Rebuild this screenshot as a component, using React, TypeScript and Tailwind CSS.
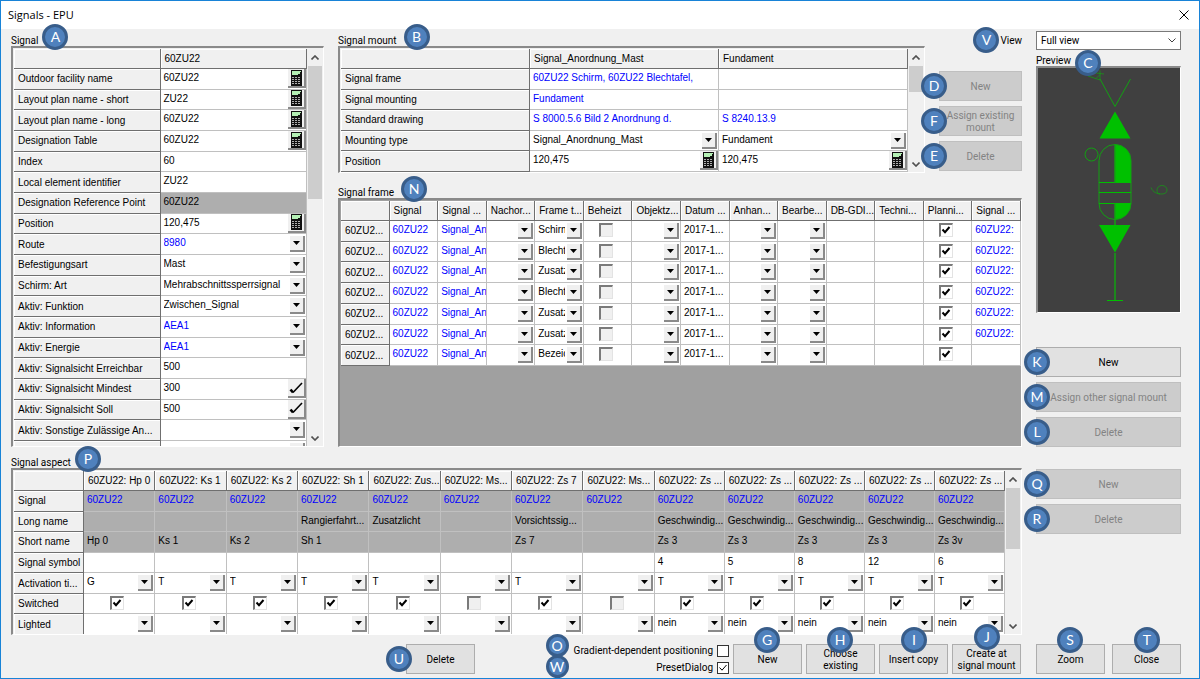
import type { ReactNode } from "react";
import clsx from "clsx";

type Cell = {
  text?: string;
  kind?: "text" | "link" | "select" | "linkSelect" | "calc" | "edit" | "check";
  checked?: boolean;
  gray?: boolean;
};

type Row = { label: string; cells: Cell[] };

const t = (text = ""): Cell => ({ text });
const link = (text: string): Cell => ({ text, kind: "link" });
const sel = (text = ""): Cell => ({ text, kind: "select" });
const calc = (text: string): Cell => ({ text, kind: "calc" });
const check = (checked: boolean): Cell => ({ kind: "check", checked });
const gray = (cell: Cell): Cell => ({ ...cell, gray: true });

const SIGNAL_ROWS: Row[] = [
  { label: "Outdoor facility name", cells: [calc("60ZU22")] },
  { label: "Layout plan name - short", cells: [calc("ZU22")] },
  { label: "Layout plan name - long", cells: [calc("60ZU22")] },
  { label: "Designation Table", cells: [calc("60ZU22")] },
  { label: "Index", cells: [t("60")] },
  { label: "Local element identifier", cells: [t("ZU22")] },
  { label: "Designation Reference Point", cells: [gray(t("60ZU22"))] },
  { label: "Position", cells: [calc("120,475")] },
  { label: "Route", cells: [{ text: "8980", kind: "linkSelect" }] },
  { label: "Befestigungsart", cells: [sel("Mast")] },
  { label: "Schirm: Art", cells: [sel("Mehrabschnittssperrsignal")] },
  { label: "Aktiv: Funktion", cells: [sel("Zwischen_Signal")] },
  { label: "Aktiv: Information", cells: [{ text: "AEA1", kind: "linkSelect" }] },
  { label: "Aktiv: Energie", cells: [{ text: "AEA1", kind: "linkSelect" }] },
  { label: "Aktiv: Signalsicht Erreichbar", cells: [t("500")] },
  { label: "Aktiv: Signalsicht Mindest", cells: [{ text: "300", kind: "edit" }] },
  { label: "Aktiv: Signalsicht Soll", cells: [{ text: "500", kind: "edit" }] },
  { label: "Aktiv: Sonstige Zulässige An...", cells: [sel()] },
  { label: "", cells: [sel()] },
];

const MOUNT_ROWS: Row[] = [
  { label: "Signal frame", cells: [link("60ZU22 Schirm, 60ZU22 Blechtafel,"), t()] },
  { label: "Signal mounting", cells: [link("Fundament"), t()] },
  { label: "Standard drawing", cells: [link("S 8000.5.6 Bild 2 Anordnung d."), link("S 8240.13.9")] },
  { label: "Mounting type", cells: [sel("Signal_Anordnung_Mast"), sel("Fundament")] },
  { label: "Position", cells: [calc("120,475"), calc("120,475")] },
];

const FRAME_HEAD = [
  "Signal", "Signal ...", "Nachor...", "Frame t...", "Beheizt", "Objektz...", "Datum ...",
  "Anhan...", "Bearbe...", "DB-GDI...", "Techni...", "Planni...", "Signal ...",
];

const FRAME_TYPES = ["Schirm", "Blecht", "Zusatz", "Blecht", "Zusatz", "Zusatz", "Bezeic"];

const FRAME_ROWS: Row[] = FRAME_TYPES.map((type, i) => ({
  label: "60ZU2...",
  cells: [
    link("60ZU22"), link("Signal_An"), sel(), sel(type), check(false), sel(), t("2017-1..."),
    sel(), sel(), t(), t(), check(true), i < 6 ? link("60ZU22:") : t(),
  ],
}));

const ASPECTS = [
  { head: "Hp 0", long: "", short: "Hp 0", symbol: "", time: "G", on: true, lit: "" },
  { head: "Ks 1", long: "", short: "Ks 1", symbol: "", time: "T", on: true, lit: "" },
  { head: "Ks 2", long: "", short: "Ks 2", symbol: "", time: "T", on: true, lit: "" },
  { head: "Sh 1", long: "Rangierfahrt...", short: "Sh 1", symbol: "", time: "T", on: true, lit: "" },
  { head: "Zus...", long: "Zusatzlicht", short: "", symbol: "", time: "T", on: true, lit: "" },
  { head: "Ms...", long: "", short: "", symbol: "", time: "", on: false, lit: "" },
  { head: "Zs 7", long: "Vorsichtssig...", short: "Zs 7", symbol: "", time: "T", on: true, lit: "" },
  { head: "Ms...", long: "", short: "", symbol: "", time: "", on: false, lit: "" },
  { head: "Zs ...", long: "Geschwindig...", short: "Zs 3", symbol: "4", time: "T", on: true, lit: "nein" },
  { head: "Zs ...", long: "Geschwindig...", short: "Zs 3", symbol: "5", time: "T", on: true, lit: "nein" },
  { head: "Zs ...", long: "Geschwindig...", short: "Zs 3", symbol: "8", time: "T", on: true, lit: "nein" },
  { head: "Zs ...", long: "Geschwindig...", short: "Zs 3", symbol: "12", time: "T", on: true, lit: "nein" },
  { head: "Zs ...", long: "Geschwindig...", short: "Zs 3v", symbol: "6", time: "T", on: true, lit: "nein" },
];

const ASPECT_ROWS: Row[] = [
  { label: "Signal", cells: ASPECTS.map(() => gray(link("60ZU22"))) },
  { label: "Long name", cells: ASPECTS.map((a) => gray(t(a.long))) },
  { label: "Short name", cells: ASPECTS.map((a) => gray(t(a.short))) },
  { label: "Signal symbol", cells: ASPECTS.map((a) => t(a.symbol)) },
  { label: "Activation ti...", cells: ASPECTS.map((a) => sel(a.time)) },
  { label: "Switched", cells: ASPECTS.map((a) => check(a.on)) },
  { label: "Lighted", cells: ASPECTS.map((a) => sel(a.lit)) },
];

const ASPECT_COLS = [
  "w-[70px]",
  ...ASPECTS.map((_, i) => (i < 8 ? "w-[7.2%]" : "w-auto")),
];

function Badge({ children, className }: { children: string; className: string }) {
  return (
    <span
      className={clsx(
        "absolute z-10 flex items-center justify-center rounded-full border-3 border-[#385d8a] bg-[#4f81bd] font-[Lato,sans-serif] text-sm leading-none text-white",
        className
      )}
    >
      {children}
    </span>
  );
}

function CalcIcon() {
  return (
    <svg viewBox="0 0 11 16" className="h-4 w-[11px]" shapeRendering="crispEdges">
      <rect width="11" height="16" fill="#111" />
      <rect x="1" y="1" width="9" height="4" fill="#b4f0b4" />
      <path d="M7 4h2V2" stroke="#111" fill="none" />
      {[7, 9, 11, 13].map((y) => (
        <path key={y} d={`M1 ${y + 0.5}h2M4 ${y + 0.5}h2M7 ${y + 0.5}h2`} stroke="#b0b0b0" />
      ))}
    </svg>
  );
}

function ToolButton({ label, children }: { label: string; children: ReactNode }) {
  return (
    <button
      type="button"
      aria-label={label}
      className="absolute top-0 right-0 flex h-[19px] w-[18px] items-center justify-center border-r-2 border-b-2 border-[#8a8a8a] bg-[#f0f0f0]"
    >
      {children}
    </button>
  );
}

function CheckMark({ className }: { className?: string }) {
  return (
    <svg viewBox="0 0 10 10" className={className} fill="none" stroke="currentColor">
      <path d="M1.5 4.5 4 7.2 8.5 2" />
    </svg>
  );
}

function CellContent({ cell, name }: { cell: Cell; name: string }) {
  const { kind = "text", text = "" } = cell;

  if (kind === "check") {
    return (
      <div className="flex h-[18px] items-center justify-center pr-1">
        <span className="relative flex">
          <input
            type="checkbox"
            aria-label={name}
            defaultChecked={cell.checked}
            className="peer size-3.5 appearance-none border-t-2 border-r border-b border-l-2 border-[#e3e3e3] border-t-[#7a7a7a] border-l-[#7a7a7a] bg-[#f0f0f0] checked:bg-white"
          />
          <CheckMark className="pointer-events-none absolute top-[2px] left-[2px] hidden size-2.5 stroke-2 peer-checked:block" />
        </span>
      </div>
    );
  }

  if (kind === "select" || kind === "linkSelect") {
    return (
      <div className="relative h-[19px]">
        <select
          aria-label={name}
          className={clsx(
            "block h-[18px] w-full appearance-none overflow-hidden pr-[18px] pl-[3px] leading-[18px] text-clip outline-none",
            kind === "linkSelect" && "text-[#0000ff]"
          )}
        >
          <option>{text}</option>
        </select>
        <span className="pointer-events-none absolute top-[2px] right-px flex h-4 w-[15px] items-center justify-center border-r-2 border-b-2 border-[#8a8a8a] bg-[#f0f0f0]">
          <svg viewBox="0 0 7 4" className="h-1 w-[7px]">
            <path d="M0 0h7L3.5 4z" />
          </svg>
        </span>
      </div>
    );
  }

  return (
    <div className="relative h-[19px] overflow-hidden pl-[3px] leading-[18px] whitespace-nowrap">
      {kind === "link" ? <a href="#" className="text-[#0000ff]">{text}</a> : text}
      {kind === "calc" && (
        <ToolButton label={`Calculate ${name}`}>
          <CalcIcon />
        </ToolButton>
      )}
      {kind === "edit" && (
        <ToolButton label={`Edit ${name}`}>
          <svg viewBox="0 0 14 14" className="size-3.5" fill="none" stroke="#000">
            <path d="M1.5 8.5 4 11.5" strokeWidth="2.6" />
            <path d="M4 11.5 13 2" strokeWidth="1.6" />
          </svg>
        </ToolButton>
      )}
    </div>
  );
}

function DataGrid({ head, rows, className, cols }: { head: string[]; rows: Row[]; className: string; cols?: string[] }) {
  const headCell =
    "overflow-hidden border-r border-b border-[#6f6f6f] bg-[#f0f0f0] p-0 pt-px pl-1 text-left font-normal whitespace-nowrap shadow-[inset_1px_1px_0_#fff]";
  return (
    <table
      className={clsx(
        "w-full table-fixed border-separate border-spacing-0 font-['Liberation_Sans',sans-serif] text-[10px] leading-4",
        className
      )}
    >
      {cols && (
        <colgroup>
          {cols.map((c, i) => (
            <col key={i} className={c} />
          ))}
        </colgroup>
      )}
      <thead>
        <tr className="h-5">
          <th className={headCell} />
          {head.map((h, i) => (
            <th key={i} scope="col" className={headCell}>{h}</th>
          ))}
        </tr>
      </thead>
      <tbody>
        {rows.map((row, r) => (
          <tr key={r} className="h-5">
            <th scope="row" className={headCell}>{row.label}</th>
            {row.cells.map((cell, c) => (
              <td
                key={c}
                className={clsx(
                  "overflow-hidden border-r border-b border-[#c0c0c0] p-0 align-top",
                  cell.gray ? "bg-[#aeaeae]" : "bg-white"
                )}
              >
                <CellContent cell={cell} name={row.label} />
              </td>
            ))}
          </tr>
        ))}
      </tbody>
    </table>
  );
}

function ScrollBar({ thumb }: { thumb: string }) {
  return (
    <div className="flex w-4 shrink-0 flex-col items-center bg-[#f0f0f0]" aria-hidden="true">
      <svg viewBox="0 0 8 5" className="my-[6px] h-[5px] w-2 shrink-0" fill="none" stroke="#505050" strokeWidth="1.6">
        <path d="M.5 4.5 4 1l3.5 3.5" />
      </svg>
      <div className={clsx("w-3.5 shrink-0 bg-[#cdcdcd]", thumb)} />
      <svg viewBox="0 0 8 5" className="mt-auto mb-[5px] h-[5px] w-2 shrink-0" fill="none" stroke="#505050" strokeWidth="1.6">
        <path d="M.5.5 4 4 7.5.5" />
      </svg>
    </div>
  );
}

function Panel({ className, children }: { className: string; children: ReactNode }) {
  return (
    <div
      className={clsx(
        "flex overflow-hidden border-t-2 border-r border-b border-l-2 border-white border-t-[#8a8a8a] border-l-[#8a8a8a] pt-px pl-px",
        className
      )}
    >
      {children}
    </div>
  );
}

function PanelTitle({ badge, badgeClass, children }: { badge: string; badgeClass: string; children: string }) {
  return (
    <h2 className="flex h-[17px] items-end leading-[10px]">
      <span className="relative">
        {children}
        <Badge className={clsx("-top-3 left-full size-[26px]", badgeClass)}>{badge}</Badge>
      </span>
    </h2>
  );
}

type PushButtonProps = {
  badge: string;
  badgeClass: string;
  className?: string;
  disabled?: boolean;
  children: string;
};

function PushButton({ badge, badgeClass, className, disabled, children }: PushButtonProps) {
  return (
    <div className={clsx("relative", className)}>
      <button
        type="button"
        disabled={disabled}
        className="flex h-[30px] w-full items-center justify-center border border-[#adadad] bg-[#e1e1e1] px-1 pt-px text-center leading-3 disabled:border-[#bfbfbf] disabled:bg-[#cccccc] disabled:text-[#838383]"
      >
        {children}
      </button>
      <Badge className={clsx("size-[26px]", badgeClass)}>{badge}</Badge>
    </div>
  );
}

function OptionCheck({ id, label, badge, checked }: { id: string; label: string; badge: string; checked?: boolean }) {
  return (
    <div className="flex h-[17px] items-center justify-end gap-1">
      <label htmlFor={id}>{label}</label>
      <span className="relative flex">
        <input
          id={id}
          type="checkbox"
          defaultChecked={checked}
          className="peer size-3 appearance-none border border-[#333] bg-white"
        />
        <CheckMark className="pointer-events-none absolute top-px left-px hidden size-2.5 peer-checked:block" />
      </span>
      <Badge className={clsx("left-0 size-[23px]", badge === "O" ? "-top-2" : "-bottom-0.5")}>{badge}</Badge>
    </div>
  );
}

function Preview() {
  return (
    <svg viewBox="0 0 142 244" className="block w-full" fill="none" stroke="#12a012">
      <path d="M62 11 77 38.5 92.5 11" />
      <path d="M62 2.5v9.5L50 8M58 5l8 1M58 10.5l4-4" strokeWidth=".7" />
      <path d="M77 43.5 92.5 70.5h-31zM61 157h31.5L77 184.5z" fill="#00c000" stroke="none" />
      <path d="M77 76.5a16 16 0 0 1 16 16v22H77zM77 135.5h16a16 16 0 0 1-16 16z" fill="#00c000" stroke="none" />
      <rect x="61" y="76.5" width="32" height="75" rx="16" />
      <path d="M61 114.5h32M61 124.5h32M61 135.5h32" stroke="#00c000" />
      <path d="M77 76.5v38M77 135.5V157M77 185v47" strokeWidth="1.5" />
      <path d="M69 232.5h16" stroke="#00c000" />
      <circle cx="53.5" cy="86.5" r="6.5" />
      <path d="M113 119.5c2 5 6 6.5 11 6.5 3 0 5-1.5 5-4s-2-4.5-5-4.5-5 2-5 4.5 1 4 3 4" strokeWidth=".7" />
    </svg>
  );
}

export default function App() {
  return (
    <div className="flex min-h-screen flex-col border border-[#1883d7] bg-[#f0f0f0] font-[Roboto,sans-serif] text-[10px] text-black">
      <header className="flex h-7 items-center justify-between bg-white pr-[10px] pl-[7px] font-['Open_Sans',sans-serif] text-[11px]">
        <h1>Signals - EPU</h1>
        <button type="button" aria-label="Close window">
          <svg viewBox="0 0 10 10" className="size-2.5" stroke="#000" fill="none">
            <path d="M.5.5l9 9M9.5.5l-9 9" />
          </svg>
        </button>
      </header>

      <main className="flex gap-3.5 pr-[18px] pl-[10px]">
        <div className="min-w-0 flex-1">
          <div className="flex gap-3.5">
            <section className="w-[313px] shrink-0">
              <PanelTitle badge="A" badgeClass="ml-1">Signal</PanelTitle>
              <Panel className="h-[401px]">
                <div className="min-w-0 flex-1">
                  <DataGrid head={["60ZU22"]} rows={SIGNAL_ROWS} className="h-[413px]" />
                </div>
                <ScrollBar thumb="h-[133px]" />
              </Panel>
            </section>

            <div className="min-w-0 flex-1">
              <div className="flex gap-3.5">
                <section className="min-w-0 flex-1">
                  <PanelTitle badge="B" badgeClass="ml-[7px]">Signal mount</PanelTitle>
                  <Panel className="h-[127px]">
                    <div className="min-w-0 flex-1">
                      <DataGrid head={["Signal_Anordnung_Mast", "Fundament"]} rows={MOUNT_ROWS} className="h-[123px]" />
                    </div>
                    <ScrollBar thumb="h-[26px]" />
                  </Panel>
                </section>
                <div className="w-[83px] shrink-0">
                  <div className="flex h-[17px] items-end justify-end leading-[10px]">
                    <span className="relative">
                      <label htmlFor="view">View</label>
                      <Badge className="-top-[9px] right-full mr-px size-[26px]">V</Badge>
                    </span>
                  </div>
                  <div className="mt-[25px] flex flex-col gap-[5px]">
                    <PushButton badge="D" badgeClass="top-[2px] -left-[18px]" disabled>New</PushButton>
                    <PushButton badge="F" badgeClass="top-[2px] -left-[18px]" disabled>Assign existing mount</PushButton>
                    <PushButton badge="E" badgeClass="top-[2px] -left-[18px]" disabled>Delete</PushButton>
                  </div>
                </div>
              </div>

              <section className="mt-2">
                <PanelTitle badge="N" badgeClass="ml-[7px]">Signal frame</PanelTitle>
                <Panel className="h-[249px] bg-[#a0a0a0]">
                  <div className="min-w-0 flex-1">
                    <DataGrid head={FRAME_HEAD} rows={FRAME_ROWS} className="h-[165px]" />
                  </div>
                </Panel>
              </section>
            </div>
          </div>

          <section className="mt-1">
            <PanelTitle badge="P" badgeClass="ml-1">Signal aspect</PanelTitle>
            <Panel className="h-[167px]">
              <div className="min-w-0 flex-1">
                <DataGrid
                  head={ASPECTS.map((a) => `60ZU22: ${a.head}`)}
                  rows={ASPECT_ROWS}
                  cols={ASPECT_COLS}
                  className="h-[164px]"
                />
              </div>
              <ScrollBar thumb="h-[61px]" />
            </Panel>
          </section>
        </div>

        <aside className="w-[145px] shrink-0 pt-[2px]">
          <div className="relative">
            <select id="view" className="block h-[19px] w-full appearance-none border border-[#7a7a7a] bg-white pl-1 leading-4">
              <option>Full view</option>
            </select>
            <svg viewBox="0 0 8 5" className="pointer-events-none absolute top-[7px] right-[5px] h-[5px] w-2" fill="none" stroke="#404040">
              <path d="M.5.5 4 4 7.5.5" />
            </svg>
          </div>
          <h2 className="h-4 leading-[22px]">
            <span className="relative">
              Preview
              <Badge className="-top-[5px] left-full ml-1 size-[26px]">C</Badge>
            </span>
          </h2>
          <div className="border-t-2 border-r border-b border-l-2 border-white border-t-[#8a8a8a] border-l-[#8a8a8a] bg-[#404040]">
            <Preview />
          </div>
          <div className="mt-[34px] flex flex-col gap-[5px]">
            <PushButton badge="K" badgeClass="top-[2px] -left-[12px]">New</PushButton>
            <PushButton badge="M" badgeClass="top-[2px] -left-[12px]" disabled>Assign other signal mount</PushButton>
            <PushButton badge="L" badgeClass="top-[2px] -left-[12px]" disabled>Delete</PushButton>
          </div>
          <div className="mt-[22px] flex flex-col gap-[5px]">
            <PushButton badge="Q" badgeClass="top-[2px] -left-[12px]" disabled>New</PushButton>
            <PushButton badge="R" badgeClass="top-[2px] -left-[12px]" disabled>Delete</PushButton>
          </div>
        </aside>
      </main>

      <footer className="mt-[7px] flex items-center pr-[18px] pl-[405px]">
        <PushButton badge="U" badgeClass="top-[2px] -left-[20px]" className="w-[69px]">Delete</PushButton>
        <div className="relative ml-auto pl-[28px]">
          <OptionCheck id="gradient" label="Gradient-dependent positioning" badge="O" />
          <OptionCheck id="preset" label="PresetDialog" badge="W" checked />
        </div>
        <div className="ml-1 flex gap-1">
          <PushButton badge="G" badgeClass="-top-[17px] left-[21px]" className="w-[69px]">New</PushButton>
          <PushButton badge="H" badgeClass="-top-[17px] left-[21px]" className="w-[69px]">Choose existing</PushButton>
          <PushButton badge="I" badgeClass="-top-[17px] left-[22px]" className="w-[69px]">Insert copy</PushButton>
          <PushButton badge="J" badgeClass="-top-[20px] left-[22px]" className="w-[69px]">Create at signal mount</PushButton>
        </div>
        <div className="ml-[15px] flex gap-[7px]">
          <PushButton badge="S" badgeClass="-top-[17px] left-[21px]" className="w-[69px]">Zoom</PushButton>
          <PushButton badge="T" badgeClass="-top-[17px] left-[22px]" className="w-[69px]">Close</PushButton>
        </div>
      </footer>
    </div>
  );
}
